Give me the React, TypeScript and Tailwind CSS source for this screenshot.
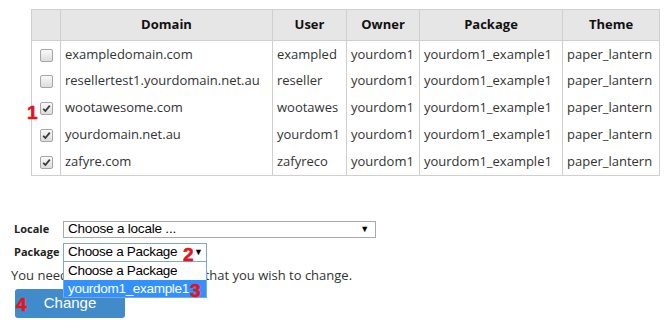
const rows = [
  { domain: "exampledomain.com", user: "exampled", checked: false },
  { domain: "resellertest1.yourdomain.net.au", user: "reseller", checked: false },
  { domain: "wootawesome.com", user: "wootawes", checked: true },
  { domain: "yourdomain.net.au", user: "yourdom1", checked: true },
  { domain: "zafyre.com", user: "zafyreco", checked: true },
];

function Check({ on }: { on: boolean }) {
  return (
    <span className="inline-flex h-[13px] w-[13px] items-center justify-center rounded-[2px] border border-[#a6a6a6] bg-gradient-to-b from-[#fafafa] to-[#dcdcdc] align-middle">
      {on && (
        <svg width="9" height="9" viewBox="0 0 9 9">
          <path d="M1.2 4.8 L3.4 7 L7.8 1.6" fill="none" stroke="#3a3a3a" strokeWidth="1.8" />
        </svg>
      )}
    </span>
  );
}

function Mark({ n, className }: { n: string; className: string }) {
  return (
    <span className={"absolute font-bold text-[19px] leading-none text-[#e3151c] font-['Liberation_Sans',sans-serif] [-webkit-text-stroke:0.6px_#e3151c] " + className}>
      {n}
    </span>
  );
}

const th = "border border-[#cfcfcf] bg-[#e6e6e6] font-bold text-[13px] text-[#111] text-center h-[31px]";
const td = "border-x border-[#cfcfcf] h-[27px] pl-[4px] whitespace-nowrap";

export default function App() {
  return (
    <div className="relative h-[332px] w-[665px] overflow-hidden bg-white font-['Open_Sans',sans-serif] text-[13px] text-[#333]">
      <table className="ml-[31px] mt-[9px] border-collapse border border-[#cfcfcf]">
        <thead>
          <tr>
            <th className={th + " w-[29px]"}></th>
            <th className={th + " w-[212px]"}>Domain</th>
            <th className={th + " w-[74px]"}>User</th>
            <th className={th + " w-[73px]"}>Owner</th>
            <th className={th + " w-[143px]"}>Package</th>
            <th className={th + " w-[97px]"}>Theme</th>
          </tr>
        </thead>
        <tbody>
          {rows.map((r) => (
            <tr key={r.domain}>
              <td className="border-x border-[#cfcfcf] h-[27px] text-center">
                <Check on={r.checked} />
              </td>
              <td className={td}>{r.domain}</td>
              <td className={td}>{r.user}</td>
              <td className={td}>yourdom1</td>
              <td className={td}>yourdom1_example1</td>
              <td className={td}>paper_lantern</td>
            </tr>
          ))}
        </tbody>
      </table>

      <div className="mt-[45px] pl-[11px]">
        <div className="flex items-center">
          <span className="w-[52px] pl-[3px] text-[11px] font-bold text-[#222]">Locale</span>
          <div className="flex h-[17px] w-[313px] items-center justify-between border border-[#a9a9a9] bg-white pl-[4px] pr-[6px] font-['Liberation_Sans',sans-serif] text-[13.5px] tracking-[-0.2px] text-black">
            <span>Choose a locale ...</span>
            <span className="text-[9px]">▼</span>
          </div>
        </div>
        <div className="relative mt-[5px] flex items-center">
          <span className="w-[52px] pl-[3px] text-[11px] font-bold text-[#222]">Package</span>
          <div className="flex h-[19px] w-[144px] items-center justify-between border border-[#7ea6dc] bg-white pl-[4px] pr-[3px] font-['Liberation_Sans',sans-serif] text-[14px] text-black">
            <span className="text-[13.5px] tracking-[-0.3px]">Choose a Package</span>
            <span className="text-[9px]">▼</span>
          </div>
          <div className="absolute left-[52px] top-[18px] z-10 w-[144px] border border-[#7ea6dc] bg-white font-['Liberation_Sans',sans-serif] text-[13.5px] tracking-[-0.3px] text-black">
            <div className="h-[18px] pl-[4px] leading-[18px]">Choose a Package</div>
            <div className="h-[17px] bg-[#3390ff] pl-[4px] leading-[17px] text-white">yourdom1_example1</div>
          </div>
        </div>
        <p className="mt-[4px] leading-[18px]">You need to select the domains that you wish to change.</p>
        <button className="ml-[4px] mt-[5px] h-[29px] w-[110px] rounded-[3px] bg-[#428bca] font-['Liberation_Sans',sans-serif] text-[15px] text-white">
          Change
        </button>
      </div>

      <Mark n="1" className="left-[27px] top-[103px]" />
      <Mark n="2" className="left-[183px] top-[245px] z-20" />
      <Mark n="3" className="left-[190px] top-[281px] z-20" />
      <Mark n="4" className="left-[16px] top-[295px]" />
    </div>
  );
}
